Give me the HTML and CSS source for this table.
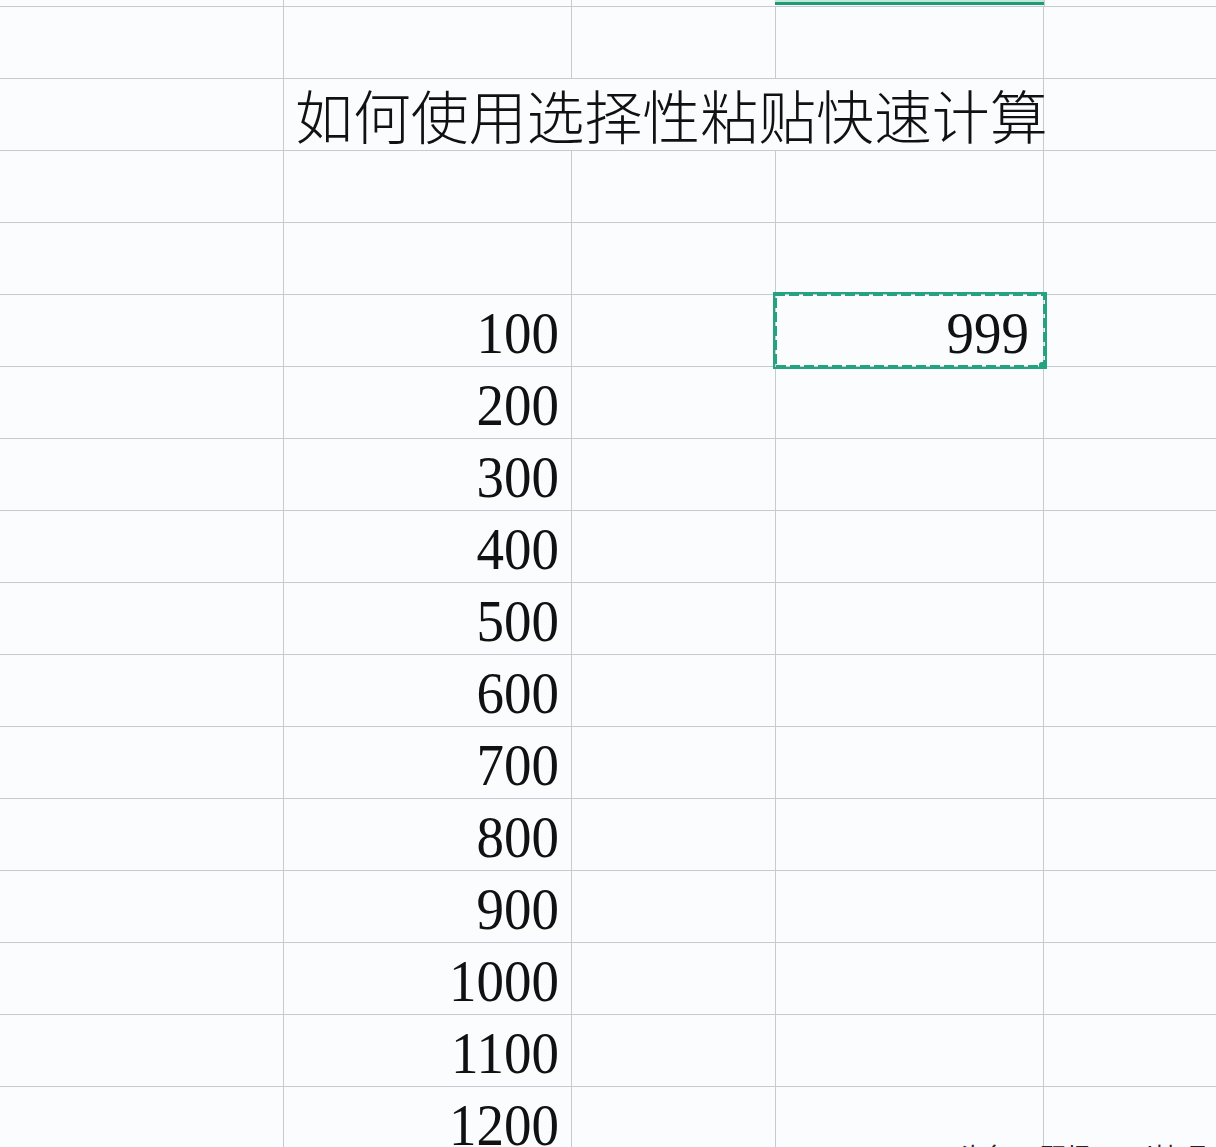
FILE: index.html
```html
<!DOCTYPE html>
<html lang="zh">
<head>
<meta charset="utf-8">
<title>如何使用选择性粘贴快速计算</title>
<link rel="stylesheet" href="styles.css">
</head>
<body>
<div class="sheet">
  <div class="c hdr"></div><div class="c hdr"></div><div class="c hdr"></div><div class="c hdr col-sel"></div><div class="c hdr"></div>

  <div class="c"></div><div class="c"></div><div class="c"></div><div class="c"></div><div class="c"></div>

  <div class="c"></div><div class="c title">如何使用选择性粘贴快速计算</div><div class="c"></div>

  <div class="c"></div><div class="c"></div><div class="c"></div><div class="c"></div><div class="c"></div>
  <div class="c"></div><div class="c"></div><div class="c"></div><div class="c"></div><div class="c"></div>

  <div class="c"></div><div class="c num"><span>100</span></div><div class="c"></div>
  <div class="c num num-r selected"><span>999</span>
    <svg class="ants" width="274" height="77" viewBox="0 0 274 77" aria-hidden="true">
      <rect x="1" y="1" width="272" height="75" fill="none" stroke="#25a27f" stroke-width="2"/>
      <rect x="2" y="2" width="270" height="73" fill="none" stroke="#25a27f" stroke-width="4" stroke-dasharray="10 4"/>
      <rect x="266" y="70" width="8" height="7" rx="2.5" fill="#25a27f"/>
    </svg>
  </div>
  <div class="c"></div>

  <div class="c"></div><div class="c num"><span>200</span></div><div class="c"></div><div class="c"></div><div class="c"></div>
  <div class="c"></div><div class="c num"><span>300</span></div><div class="c"></div><div class="c"></div><div class="c"></div>
  <div class="c"></div><div class="c num"><span>400</span></div><div class="c"></div><div class="c"></div><div class="c"></div>
  <div class="c"></div><div class="c num"><span>500</span></div><div class="c"></div><div class="c"></div><div class="c"></div>
  <div class="c"></div><div class="c num"><span>600</span></div><div class="c"></div><div class="c"></div><div class="c"></div>
  <div class="c"></div><div class="c num"><span>700</span></div><div class="c"></div><div class="c"></div><div class="c"></div>
  <div class="c"></div><div class="c num"><span>800</span></div><div class="c"></div><div class="c"></div><div class="c"></div>
  <div class="c"></div><div class="c num"><span>900</span></div><div class="c"></div><div class="c"></div><div class="c"></div>
  <div class="c"></div><div class="c num"><span>1000</span></div><div class="c"></div><div class="c"></div><div class="c"></div>
  <div class="c"></div><div class="c num"><span>1100</span></div><div class="c"></div><div class="c"></div><div class="c"></div>
  <div class="c"></div><div class="c num"><span>1200</span></div><div class="c"></div><div class="c"></div><div class="c"></div>
</div>
<div class="watermark">头条 @职场Excel技巧</div>
</body>
</html>
```
FILE: styles.css
```css
html, body {
  margin: 0;
  padding: 0;
  background: #fbfcfe;
  overflow: hidden;
  height: 1147px;
}
.sheet {
  display: grid;
  grid-template-columns: 284px 288px 204px 268px 174px;
  grid-template-rows: 7px repeat(16, 72px);
  width: 1218px;
}
.c {
  box-sizing: border-box;
  border-right: 1px solid #c7cad3;
  border-bottom: 1px solid #c7cad3;
  min-width: 0;
}
.col-sel {
  background: linear-gradient(to bottom, #bfe8d8 0, #bfe8d8 2px, #1f9c76 2px, #1f9c76 5px, #fbfcfe 5px);
  margin-left: -1px;
  margin-right: -1px;
}
.title {
  grid-column: span 3;
  font-family: "Noto Sans CJK SC", sans-serif;
  font-weight: 300;
  font-size: 57.9px;
  line-height: 71px;
  color: #111;
  white-space: nowrap;
  padding-left: 11px;
  overflow: visible;
  position: relative;
  z-index: 1;
}
.num {
  display: flex;
  align-items: flex-end;
  justify-content: flex-end;
  padding-right: 12px;
  font-family: "Liberation Serif", "Times New Roman", serif;
  font-size: 55px;
  color: #111;
}
.num span {
  display: block;
  line-height: normal;
  transform: scaleY(1.07);
  transform-origin: right 80%;
}
.num-r {
  padding-right: 14px;
}
.selected {
  position: relative;
}
.ants {
  position: absolute;
  left: -3px;
  top: -3px;
  display: block;
}
.watermark {
  position: absolute;
  left: 958px;
  top: 1137px;
  font-family: "Noto Sans CJK SC", sans-serif;
  font-size: 26px;
  color: #222;
  white-space: nowrap;
}
```
